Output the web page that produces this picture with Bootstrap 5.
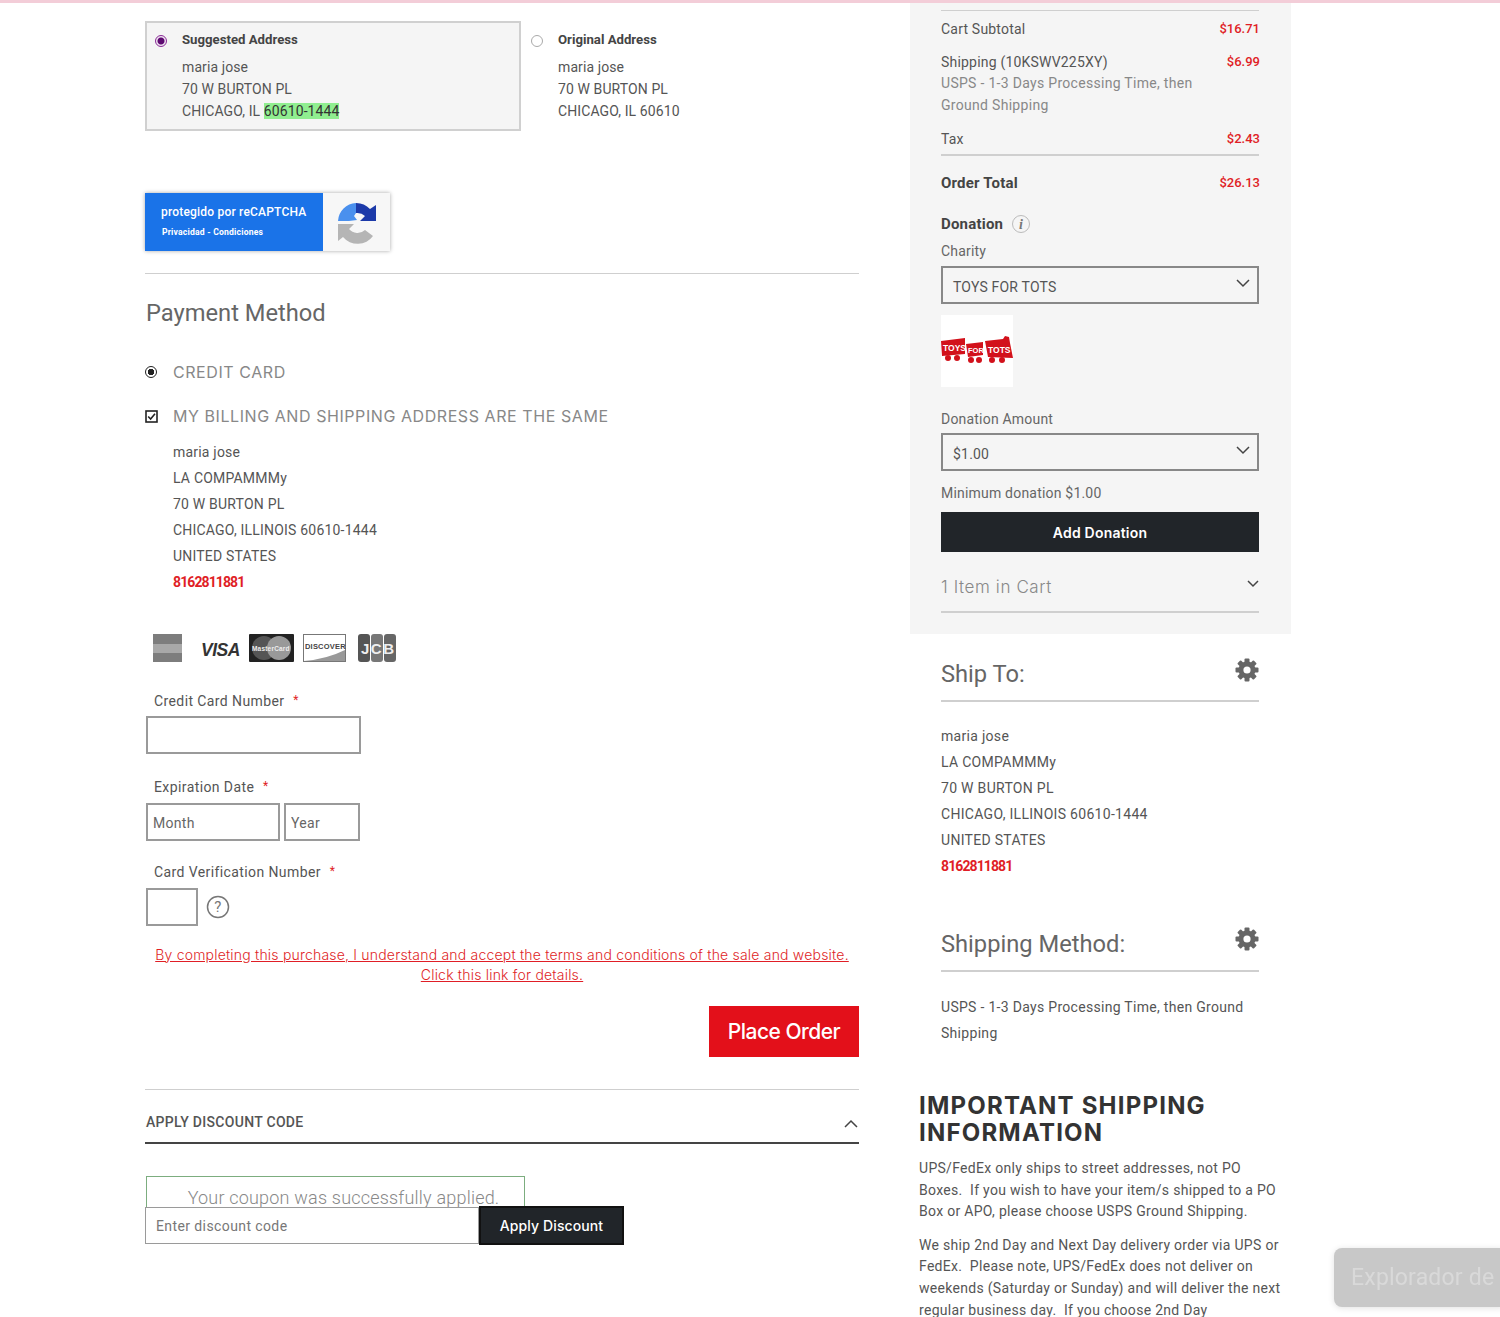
<!DOCTYPE html>
<html lang="en">
<head>
<meta charset="UTF-8">
<meta name="viewport" content="width=device-width, initial-scale=1.0">
<title>Checkout</title>
<link href="https://cdn.jsdelivr.net/npm/bootstrap@5.3.2/dist/css/bootstrap.min.css" rel="stylesheet">
<style>
    html, body { height: 1317px; overflow: hidden; }
    body { background: #fff; color: #555; font-family: Roboto, "Liberation Sans", sans-serif; font-size: 14px; letter-spacing: .2px; }
    .top-line { height: 3px; background: #f3cdd8; }
    .page-wrap { padding-left: 145px; gap: 51px; }
    .left-col { width: 714px; }
    .right-col { width: 381px; }

    .addr-row { margin-top: 18px; height: 110px; }
    .addr-box { width: 376px; height: 110px; padding: 9px 0 0 8px; border: 2px solid #d0d0d0; background: #f5f5f5; }
    .addr-plain { padding: 9px 0 0 8px; border: 2px solid transparent; }
    .addr-title { font-size: 13.2px; font-weight: 700; color: #444; line-height: 16px; margin-bottom: 8px; letter-spacing: 0; }
    .addr-lines { line-height: 22px; font-size: 14px; color: #555; letter-spacing: .1px; }
    .addr-radio { width: 12px; height: 12px; margin: 3px 15px 0 0; border-radius: 50%; flex: none; }
    .radio-on { border: 1px solid #8a2a96; background: radial-gradient(circle, #5d0a70 0 3px, #f0e4f2 4px); }
    .radio-off { border: 1px solid #aaa; background: #fff; }
    .zip-new { background: #90ee90; color: #333; }

    .captcha { width: 245px; height: 58px; margin-top: 62px; background: #f7f7f7; box-shadow: 0 0 4px rgba(0,0,0,.35); }
    .captcha-blue { width: 178px; padding: 10px 0 0 16px; background: #1a73e8; color: #fff; font-size: 12px; font-weight: 500; }
    .captcha-blue p { margin: 0; }
    .captcha-sub { font-size: 8.6px; font-weight: 700; padding-left: 1px; margin-top: 5px !important; }

    .rule { border-top: 1px solid #cfcfcf; }
    .sec-title { font-size: 23.7px; color: #666; font-weight: 400; line-height: 28px; margin: 0; letter-spacing: 0; }
    .caps-label { font-family: Inter, "Noto Sans", sans-serif; font-size: 16px; color: #888; line-height: 18px; font-weight: 400; letter-spacing: .57px; }
    .pay-radio { width: 12px; height: 12px; border: 1.5px solid #222; border-radius: 50%; background: radial-gradient(circle, #222 0 3px, #fff 3.5px); margin-right: 16px; }
    .pay-check { width: 13px; height: 13px; margin-right: 15px; }
    .addr-block { margin: 14px 0 0 28px; line-height: 26px; color: #555; }
    .phone { color: #e01e26; font-weight: 700; font-size: 14px; letter-spacing: -.9px; }

    .cards { margin: 38px 0 0 7px; height: 32px; }
    .field-label { margin-left: 9px; line-height: 18px; color: #555; letter-spacing: .4px; }
    .req { color: #e01e26; margin-left: 5px; font-size: 12px; vertical-align: 2px; }
    .box-input { height: 38px; margin-left: 1px; border: 2px solid #9a9a9a; border-radius: 0; padding: 2px 5px 0; font-size: 14px; color: #555; letter-spacing: .3px; }
    .box-input::placeholder { color: #666; opacity: 1; }
    .box-input + .box-input { margin-left: 0; }
    .terms { margin: 19px 0 0; line-height: 20px; text-align: center; font-size: 14px; font-family: Inter, sans-serif; font-weight: 300; letter-spacing: .2px; }
    .terms a { color: #e01e26; }
    .place-btn { width: 150px; height: 51px; background: #e3101a; border: 0; border-radius: 0; color: #fff; font-size: 21px; font-family: Inter, sans-serif; font-weight: 500; letter-spacing: -.5px; }
    .discount-head { height: 54px; padding: 12px 0 0 1px; border-bottom: 2px solid #444; color: #555; font-weight: 500; letter-spacing: .3px; }
    .coupon { width: 379px; height: 31px; margin: 32px 0 0 1px; padding-left: 16px; border: 1.5px solid #7cad7f; border-bottom: 0; color: #888; font-size: 18px; font-weight: 300; text-align: center; line-height: 42px; overflow: hidden; }
    .coupon-wrap { width: 479px; }
    .discount-input { width: 334px; height: 37px; border: 1.5px solid #9a9a9a; padding: 0 10px; color: #777; font-size: 14px; background: #fff; line-height: 36px; letter-spacing: .4px; }
    .discount-btn { width: 145px; height: 39px; margin-top: -1px; background: #212529; border: 2px solid #111; border-radius: 0; color: #fff; font-family: Inter, sans-serif; font-size: 14px; font-weight: 500; padding: 0; letter-spacing: .1px; }

    .summary { height: 631px; padding: 7px 32px 0 31px; background: #f5f5f5; }
    .sum-rule { border-top: 1px solid #cfcfcf; }
    .sum-rule-dark { border-top: 2px solid #cfcfcf; }
    .sum-row { line-height: 20px; color: #555; }
    .price { color: #e01e26; font-weight: 500; font-size: 13px; letter-spacing: 0; margin-right: -1px; }
    .muted-line { color: #888; line-height: 21.5px; letter-spacing: .3px; }
    .total-label { font-size: 15px; font-weight: 700; color: #444; letter-spacing: .2px; }
    .box-select { height: 38px; border: 2px solid #888; background: transparent; padding: 0 7px 0 10px; line-height: 38px; color: #555; }
    .box-select svg { margin-top: 11px; }
    .logo-box { width: 72px; height: 72px; background: #fff; margin-top: 11px; }
    .donate-btn { height: 40px; background: #212529; color: #fff; border: 0; border-radius: 0; font-family: Inter, sans-serif; font-size: 14px; font-weight: 600; letter-spacing: .2px; }
    .cart-row { font-family: Inter, sans-serif; font-size: 17px; color: #888; font-weight: 300; line-height: 22px; letter-spacing: .6px; }
    .ship-block { padding: 0 32px 0 31px; }
    .ship-title { height: 68px; padding-top: 26px; border-bottom: 2px solid #cfcfcf; }
    .ship-title svg { margin-top: -2px; }
    .ship-lines { line-height: 26px; margin-top: 21px; color: #555; letter-spacing: .3px; }
    .method-title { margin-top: 8px; height: 85px; padding-top: 43px; }
    .method-title svg { margin-top: -3px; }
    .method-lines { margin-top: 22px; }
    .info-block { margin-top: 46px; padding-left: 9px; width: 373px; }
    .info-title { font-family: Inter, "Noto Sans", sans-serif; font-size: 24px; font-weight: 700; line-height: 27px; color: #333; letter-spacing: 1.2px; margin: 0 0 12px; }
    .info-text { line-height: 21.6px; margin: 0 0 12px; color: #555; letter-spacing: .3px; }

    .win-toast { position: fixed; left: 1334px; top: 1248px; width: 170px; height: 59px; background: #c8c8c8; border-radius: 8px 0 0 8px; color: #d9d9d9; font-size: 23px; line-height: 59px; padding-left: 17px; white-space: nowrap; overflow: hidden; box-shadow: 0 1px 6px rgba(0,0,0,.12); }
</style>
</head>
<body>
<div class="top-line"></div>
<div class="d-flex page-wrap">
    <div class="left-col">
        <div class="d-flex addr-row">
            <div class="d-flex addr-box">
                <span class="addr-radio radio-on"></span>
                <div>
                    <div class="addr-title">Suggested Address</div>
                    <div class="addr-lines">maria jose<br>70 W BURTON PL<br>CHICAGO, IL <span class="zip-new">60610-1444</span></div>
                </div>
            </div>
            <div class="d-flex addr-plain">
                <span class="addr-radio radio-off"></span>
                <div>
                    <div class="addr-title">Original Address</div>
                    <div class="addr-lines">maria jose<br>70 W BURTON PL<br>CHICAGO, IL 60610</div>
                </div>
            </div>
        </div>

        <div class="d-flex captcha">
            <div class="captcha-blue">
                <p>protegido por reCAPTCHA</p>
                <p class="captcha-sub">Privacidad - Condiciones</p>
            </div>
            <div class="flex-grow-1 d-flex align-items-center justify-content-center">
                <svg width="42" height="44" viewBox="0 0 42 44">
                    <path d="M2 21 A19 19 0 0 1 20 3 L20 13 L18 16 L21 20 L13 21 Z" fill="#4a90ee"/>
                    <path d="M20 3 A19 19 0 0 1 34 9 L40 5 L40 21 L24 21 L29 16 A11 11 0 0 0 20 13 Z" fill="#1c3aa9"/>
                    <path d="M2 24 L18 24 L13 29 A11 11 0 0 0 29 30 L37 36 A19 19 0 0 1 7 37 L2 41 Z" fill="#b5b5b5"/>
                </svg>
            </div>
        </div>

        <div class="rule" style="margin-top:22px"></div>
        <h2 class="sec-title" style="margin-top:25px;padding-left:1px">Payment Method</h2>

        <div class="d-flex align-items-center caps-label" style="margin-top:36px"><span class="pay-radio"></span>CREDIT CARD</div>
        <div class="d-flex align-items-center caps-label" style="margin-top:26px">
            <svg class="pay-check" viewBox="0 0 13 13"><rect x="1" y="1" width="11" height="11" fill="#fff" stroke="#222" stroke-width="1.6"/><path d="M3.2 6.5 L5.6 9 L10 3.8" fill="none" stroke="#222" stroke-width="1.6"/></svg>
            MY BILLING AND SHIPPING ADDRESS ARE THE SAME
        </div>

        <div class="addr-block">
            maria jose<br>LA COMPAMMMy<br>70 W BURTON PL<br>CHICAGO, ILLINOIS 60610-1444<br>UNITED STATES<br><span class="phone">8162811881</span>
        </div>

        <div class="d-flex align-items-center cards">
            <svg width="250" height="32" viewBox="0 0 250 32">
                <rect x="1" y="1" width="29" height="28" fill="#7d7d7d"/>
                <rect x="1" y="11" width="29" height="9" fill="#a8a8a8"/>
                <text x="49" y="23" font-family="Liberation Sans, sans-serif" font-size="17.500" font-weight="700" font-style="italic" fill="#333" letter-spacing="-.5">VISA</text>
                <rect x="97" y="1" width="45" height="28" rx="1" fill="#222"/>
                <circle cx="112" cy="15" r="12" fill="#555"/>
                <circle cx="127" cy="15" r="12" fill="#999"/>
                <text x="100" y="18" font-family="Liberation Sans, sans-serif" font-size="6.500" font-weight="700" fill="#eee">MasterCard</text>
                <rect x="151.500" y="1.500" width="42" height="27" fill="#fff" stroke="#777"/>
                <path d="M152 28 L193 28 L193 17 Q175 26 152 28Z" fill="#999"/>
                <text x="153" y="16" font-family="Liberation Sans, sans-serif" font-size="7.500" font-weight="700" fill="#444">DISCOVER</text>
                <rect x="206" y="1" width="12" height="28" rx="3" fill="#555"/>
                <rect x="219" y="1" width="12" height="28" rx="3" fill="#777"/>
                <rect x="232" y="1" width="12" height="28" rx="3" fill="#666"/>
                <text x="209" y="21" font-family="Liberation Sans, sans-serif" font-size="15" font-weight="700" fill="#eee" letter-spacing="1.500">JCB</text>
            </svg>
        </div>

        <div class="field-label" style="margin-top:26px">Credit Card Number <span class="req">*</span></div>
        <input class="form-control box-input" style="width:215px;margin-top:6px" type="text">

        <div class="field-label" style="margin-top:23px">Expiration Date <span class="req">*</span></div>
        <div class="d-flex gap-1" style="margin-top:7px">
            <input class="form-control box-input" style="width:134px" placeholder="Month">
            <input class="form-control box-input" style="width:76px" placeholder="Year">
        </div>

        <div class="field-label" style="margin-top:21px">Card Verification Number <span class="req">*</span></div>
        <div class="d-flex align-items-center gap-2" style="margin-top:7px">
            <input class="form-control box-input" style="width:52px">
            <svg width="24" height="24" viewBox="0 0 24 24"><circle cx="12" cy="12" r="10.500" fill="none" stroke="#777" stroke-width="1.500"/><text x="12" y="17" text-anchor="middle" font-family="Roboto, sans-serif" font-size="15" fill="#777">?</text></svg>
        </div>

        <p class="terms"><a href="#">By completing this purchase, I understand and accept the terms and conditions of the sale and website.<br>Click this link for details.</a></p>

        <div class="d-flex justify-content-end" style="margin-top:21px">
            <button class="btn place-btn" type="button">Place Order</button>
        </div>

        <div class="rule" style="margin-top:32px"></div>
        <div class="d-flex justify-content-between align-items-center discount-head">
            <span>APPLY DISCOUNT CODE</span>
            <svg class="mt-1" width="16" height="10" viewBox="0 0 16 10"><path d="M2 8 L8 2 L14 8" fill="none" stroke="#444" stroke-width="1.500"/></svg>
        </div>

        <div class="coupon">Your coupon was successfully applied.</div>
        <div class="d-flex coupon-wrap">
            <div class="discount-input">Enter discount code</div>
            <button class="btn discount-btn" type="button">Apply Discount</button>
        </div>
    </div>

    <div class="right-col">
        <div class="summary">
            <div class="sum-rule"></div>
            <div class="d-flex justify-content-between sum-row" style="margin-top:8px"><span>Cart Subtotal</span><span class="price">$16.71</span></div>
            <div class="d-flex justify-content-between sum-row" style="margin-top:13px"><span>Shipping (10KSWV225XY)</span><span class="price">$6.99</span></div>
            <div class="muted-line" style="margin-top:1px;width:260px">USPS - 1-3 Days Processing Time, then Ground Shipping</div>
            <div class="d-flex justify-content-between sum-row" style="margin-top:13px"><span>Tax</span><span class="price">$2.43</span></div>
            <div class="sum-rule-dark" style="margin-top:5px"></div>
            <div class="d-flex justify-content-between align-items-center" style="margin-top:16px;line-height:22px"><span class="total-label">Order Total</span><span class="price">$26.13</span></div>

            <div class="d-flex align-items-center" style="margin-top:19px;line-height:22px">
                <span class="total-label">Donation</span>
                <svg class="ms-2" width="20" height="20" viewBox="0 0 20 20"><circle cx="10" cy="10" r="8.500" fill="#f5f5f5" stroke="#bbb"/><text x="10" y="15" text-anchor="middle" font-family="Liberation Serif, serif" font-style="italic" font-weight="700" font-size="14" fill="#777">i</text></svg>
            </div>
            <div style="line-height:20px;margin-top:6px;color:#666">Charity</div>
            <div class="d-flex justify-content-between box-select" style="margin-top:5px">
                <span>TOYS FOR TOTS</span>
                <svg width="14" height="9" viewBox="0 0 14 9"><path d="M1 1 L7 7 L13 1" fill="none" stroke="#444" stroke-width="1.500"/></svg>
            </div>
            <div class="logo-box d-flex align-items-center">
                <svg width="72" height="30" viewBox="0 0 72 30">
                    <path d="M0 5 L24 2 L24 18 L1 20Z M25 8 L42 6 L42 19 L27 21Z M44 5 L62 3 L64 0 L68 1 L69 7 L72 22 L47 21Z" fill="#d2111b"/>
                    <circle cx="7" cy="22" r="3" fill="#d2111b"/><circle cx="16" cy="22" r="3" fill="#d2111b"/>
                    <circle cx="30" cy="24" r="3" fill="#d2111b"/><circle cx="38" cy="24" r="3" fill="#d2111b"/>
                    <circle cx="51" cy="24" r="3" fill="#d2111b"/><circle cx="61" cy="24" r="3" fill="#d2111b"/>
                    <text x="2" y="15" font-family="Liberation Sans, sans-serif" font-size="8.500" font-weight="700" fill="#fff" letter-spacing="0">TOYS</text>
                    <text x="27" y="17" font-family="Liberation Sans, sans-serif" font-size="7.500" font-weight="700" fill="#fff" letter-spacing="0">FOR</text>
                    <text x="47" y="17" font-family="Liberation Sans, sans-serif" font-size="8.500" font-weight="700" fill="#fff" letter-spacing="0">TOTS</text>
                </svg>
            </div>
            <div style="line-height:20px;margin-top:22px;color:#666">Donation Amount</div>
            <div class="d-flex justify-content-between box-select" style="margin-top:4px">
                <span>$1.00</span>
                <svg width="14" height="9" viewBox="0 0 14 9"><path d="M1 1 L7 7 L13 1" fill="none" stroke="#444" stroke-width="1.500"/></svg>
            </div>
            <div style="line-height:20px;margin-top:12px;color:#666">Minimum donation $1.00</div>
            <button class="btn donate-btn w-100" style="margin-top:9px" type="button">Add Donation</button>
            <div class="d-flex justify-content-between cart-row" style="margin-top:24px">
                <span>1 Item in Cart</span>
                <svg class="mt-1" width="12" height="8" viewBox="0 0 12 8"><path d="M1 1 L6 6 L11 1" fill="none" stroke="#444" stroke-width="1.500"/></svg>
            </div>
            <div class="sum-rule-dark" style="margin-top:13px"></div>
        </div>

        <div class="ship-block">
            <div class="d-flex justify-content-between ship-title">
                <h2 class="sec-title">Ship To:</h2>
                <svg width="24" height="24" viewBox="0 0 24 24"><g fill="#666"><rect x="9.500" y="0.500" width="5" height="23" rx="1"/><rect x="9.500" y="0.500" width="5" height="23" rx="1" transform="rotate(45 12 12)"/><rect x="9.500" y="0.500" width="5" height="23" rx="1" transform="rotate(90 12 12)"/><rect x="9.500" y="0.500" width="5" height="23" rx="1" transform="rotate(135 12 12)"/><circle cx="12" cy="12" r="8.500"/></g><circle cx="12" cy="12" r="3.600" fill="#fff"/></svg>
            </div>
            <div class="ship-lines">maria jose<br>LA COMPAMMMy<br>70 W BURTON PL<br>CHICAGO, ILLINOIS 60610-1444<br>UNITED STATES<br><span class="phone">8162811881</span></div>

            <div class="d-flex justify-content-between ship-title method-title">
                <h2 class="sec-title">Shipping Method:</h2>
                <svg width="24" height="24" viewBox="0 0 24 24"><g fill="#666"><rect x="9.500" y="0.500" width="5" height="23" rx="1"/><rect x="9.500" y="0.500" width="5" height="23" rx="1" transform="rotate(45 12 12)"/><rect x="9.500" y="0.500" width="5" height="23" rx="1" transform="rotate(90 12 12)"/><rect x="9.500" y="0.500" width="5" height="23" rx="1" transform="rotate(135 12 12)"/><circle cx="12" cy="12" r="8.500"/></g><circle cx="12" cy="12" r="3.600" fill="#fff"/></svg>
            </div>
            <div class="ship-lines method-lines">USPS - 1-3 Days Processing Time, then Ground Shipping</div>
        </div>

        <div class="info-block">
            <h3 class="info-title">IMPORTANT SHIPPING INFORMATION</h3>
            <p class="info-text">UPS/FedEx only ships to street addresses, not PO Boxes.&nbsp; If you wish to have your item/s shipped to a PO Box or APO, please choose USPS Ground Shipping.</p>
            <p class="info-text">We ship 2nd Day and Next Day delivery order via UPS or FedEx.&nbsp; Please note, UPS/FedEx does not deliver on weekends (Saturday or Sunday) and will deliver the next regular business day.&nbsp; If you choose 2nd Day</p>
        </div>
    </div>
</div>
<div class="win-toast">Explorador de</div>
</body>
</html>
